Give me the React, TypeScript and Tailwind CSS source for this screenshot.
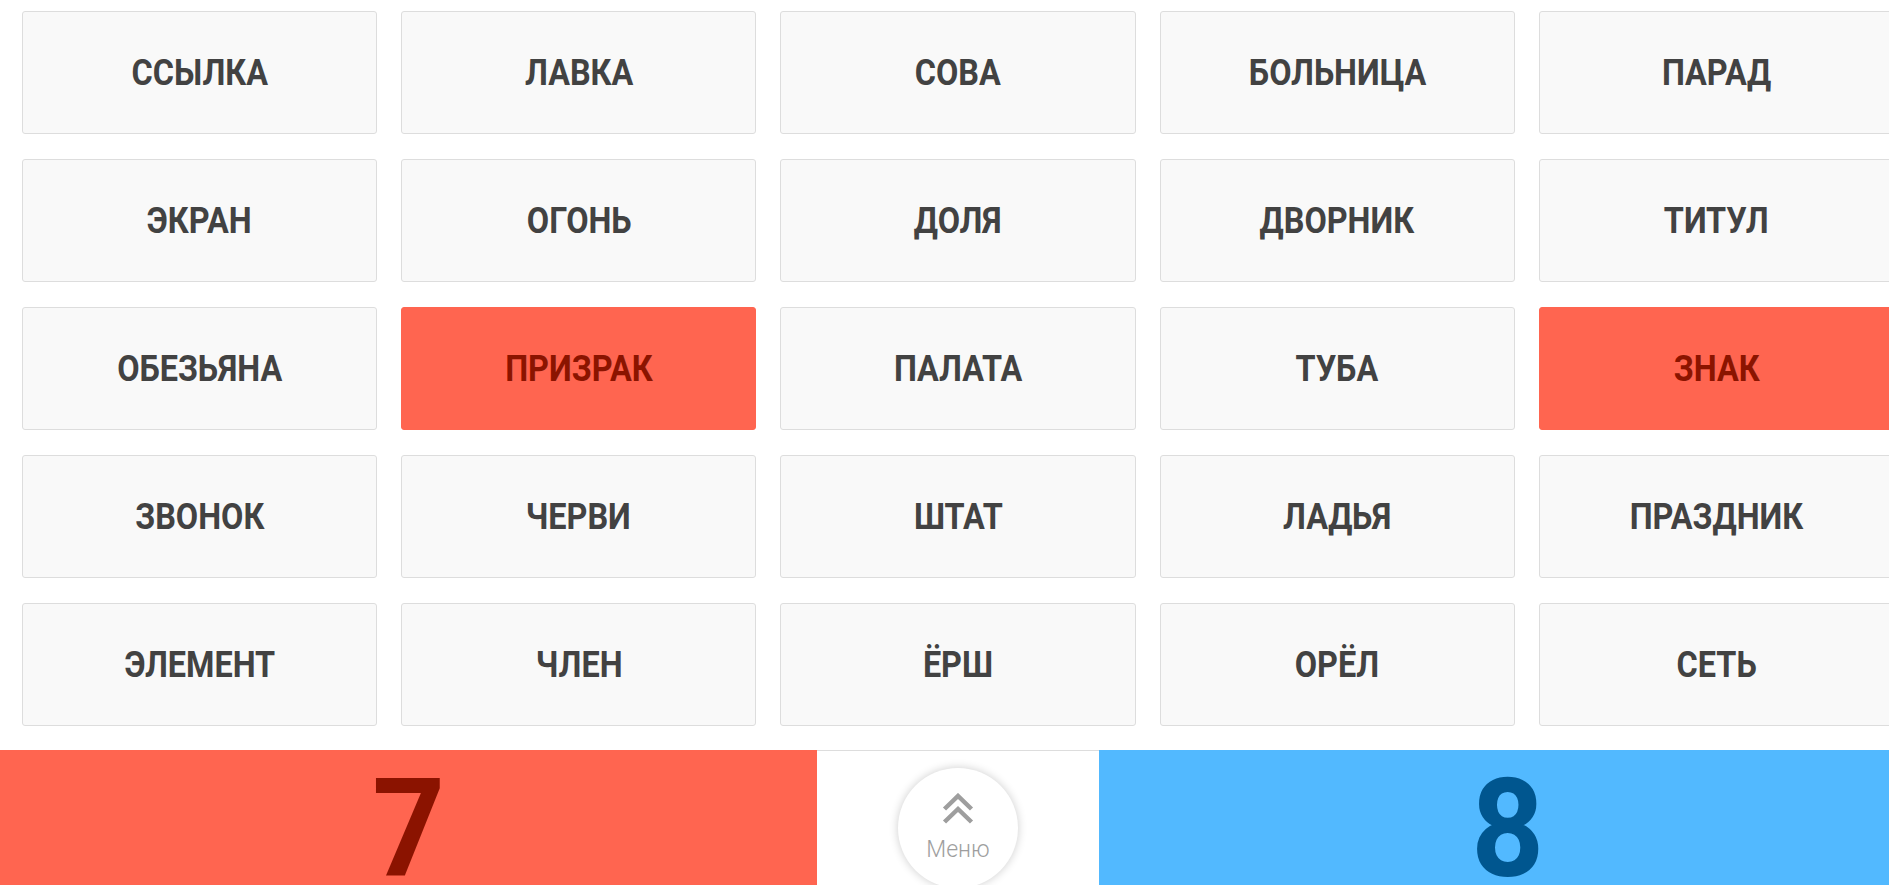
import React from "react";

const words: { w: string; red?: boolean }[] = [
  { w: "ССЫЛКА" }, { w: "ЛАВКА" }, { w: "СОВА" }, { w: "БОЛЬНИЦА" }, { w: "ПАРАД" },
  { w: "ЭКРАН" }, { w: "ОГОНЬ" }, { w: "ДОЛЯ" }, { w: "ДВОРНИК" }, { w: "ТИТУЛ" },
  { w: "ОБЕЗЬЯНА" }, { w: "ПРИЗРАК", red: true }, { w: "ПАЛАТА" }, { w: "ТУБА" }, { w: "ЗНАК", red: true },
  { w: "ЗВОНОК" }, { w: "ЧЕРВИ" }, { w: "ШТАТ" }, { w: "ЛАДЬЯ" }, { w: "ПРАЗДНИК" },
  { w: "ЭЛЕМЕНТ" }, { w: "ЧЛЕН" }, { w: "ЁРШ" }, { w: "ОРЁЛ" }, { w: "СЕТЬ" },
];

export default function App() {
  return (
    <div className="w-[1889px] h-[885px] overflow-hidden bg-white" style={{ fontFamily: "Roboto, 'Noto Sans', sans-serif" }}>
      <div className="w-[1916px]">
        <div className="grid grid-cols-5 gap-x-[24px] gap-y-[25px] px-[22px] pt-[11px]">
          {words.map((c) => (
            <div
              key={c.w}
              className={
                c.red
                  ? "h-[123px] rounded-[3px] border border-[#ff6550] bg-[#ff6550] flex items-center justify-center"
                  : "h-[123px] rounded-[3px] border border-[#dddddd] bg-[#f9f9f9] flex items-center justify-center"
              }
            >
              <span
                className={
                  c.red
                    ? "inline-block scale-x-[0.9] text-[36px] font-bold text-[#8b1400] leading-none"
                    : "inline-block scale-x-[0.9] text-[36px] font-bold text-[#424242] leading-none"
                }
              >
                {c.w}
              </span>
            </div>
          ))}
        </div>
        <div className="mt-[24px] flex h-[140px]">
          <div className="flex-1 bg-[#ff6550] flex justify-center pt-[10px]">
            <span className="inline-block scale-x-[0.92] text-[138px] font-bold leading-none text-[#8b1300]">7</span>
          </div>
          <div className="w-[282px] border-t border-[#dddddd] bg-white flex justify-center pt-[17px]">
            <div className="w-[120px] h-[120px] rounded-full bg-white shadow-[0_0_10px_rgba(0,0,0,0.2)] flex flex-col items-center pt-[25px]">
              <svg width="32" height="31" viewBox="0 0 32 31" fill="none" stroke="#9e9e9e" strokeWidth="4.5" strokeLinecap="butt">
                <path d="M2.5 16 L16 3 L29.5 16" />
                <path d="M2.5 29 L16 16 L29.5 29" />
              </svg>
              <span className="mt-[14px] text-[23px] font-light leading-none text-[#9e9e9e]">Меню</span>
            </div>
          </div>
          <div className="flex-1 bg-[#52b9ff] flex justify-center pt-[10px]">
            <span className="inline-block scale-x-[0.92] text-[138px] font-bold leading-none text-[#00568f]">8</span>
          </div>
        </div>
      </div>
    </div>
  );
}
